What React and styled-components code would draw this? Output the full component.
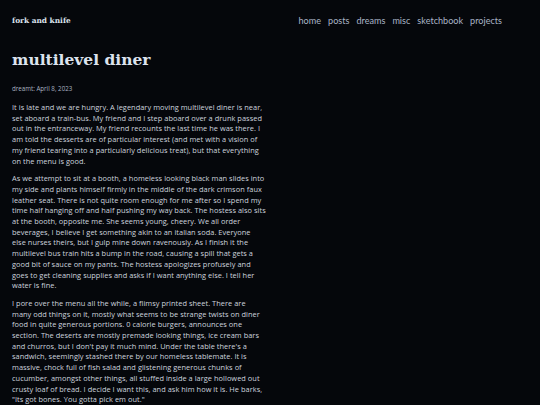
import React from "react";
import styled, { createGlobalStyle } from "styled-components";

const Global = createGlobalStyle`
  html, body { margin: 0; padding: 0; background: #05070b; }
  body { font-family: "Open Sans", "Lato", sans-serif; color: #cdd4df; }
`;

const Page = styled.div`
  width: 540px;
  height: 405px;
  overflow: hidden;
  background: #05070b;
  padding: 14px 12px 0 12px;
  box-sizing: border-box;
`;

const Header = styled.header`
  display: flex;
  align-items: center;
  justify-content: space-between;
  padding-right: 26px;
  height: 13px;
`;

const Brand = styled.a`
  font-family: "DejaVu Serif", serif;
  font-weight: bold;
  font-size: 7.4px;
  color: #dde3ee;
  text-decoration: none;
`;

const Nav = styled.nav`
  display: flex;
  gap: 7px;
`;

const NavLink = styled.a`
  font-family: "Lato", sans-serif;
  font-size: 9.1px;
  color: #a9b4c6;
  text-decoration: none;
`;

const Article = styled.article`
  width: 254px;
  margin-top: 23px;
`;

const Title = styled.h1`
  font-family: "DejaVu Serif", serif;
  font-weight: bold;
  font-size: 15.5px;
  color: #dde3ee;
  margin: 0;
  line-height: 20px;
`;

const Meta = styled.div`
  font-size: 6.2px;
  color: #aab3c2;
  margin-top: 15px;
  line-height: 8px;
`;

const Para = styled.p`
  font-size: 7.4px;
  letter-spacing: 0.04px;
  line-height: 10.7px;
  margin: 7px 0 0;
  color: #cdd4df;
  &:first-of-type { margin-top: 9px; }
`;

const links = ["home", "posts", "dreams", "misc", "sketchbook", "projects"];

export default function App() {
  return (
    <>
      <Global />
      <Page>
        <Header>
          <Brand href="#">fork and knife</Brand>
          <Nav>
            {links.map((l) => (
              <NavLink key={l} href="#">{l}</NavLink>
            ))}
          </Nav>
        </Header>
        <Article>
          <Title>multilevel diner</Title>
          <Meta>dreamt: April 8, 2023</Meta>
          <Para>
            It is late and we are hungry. A legendary moving multilevel diner is near, set aboard a train-bus. My friend and I step aboard over a drunk passed out in the entranceway. My friend recounts the last time he was there. I am told the desserts are of particular interest (and met with a vision of my friend tearing into a particularly delicious treat), but that everything on the menu is good.
          </Para>
          <Para>
            As we attempt to sit at a booth, a homeless looking black man slides into my side and plants himself firmly in the middle of the dark crimson faux leather seat. There is not quite room enough for me after so I spend my time half hanging off and half pushing my way back. The hostess also sits at the booth, opposite me. She seems young, cheery. We all order beverages, I believe I get something akin to an italian soda. Everyone else nurses theirs, but I gulp mine down ravenously. As I finish it the multilevel bus train hits a bump in the road, causing a spill that gets a good bit of sauce on my pants. The hostess apologizes profusely and goes to get cleaning supplies and asks if I want anything else. I tell her water is fine.
          </Para>
          <Para>
            I pore over the menu all the while, a flimsy printed sheet. There are many odd things on it, mostly what seems to be strange twists on diner food in quite generous portions. 0 calorie burgers, announces one section. The deserts are mostly premade looking things, ice cream bars and churros, but I don't pay it much mind. Under the table there's a sandwich, seemingly stashed there by our homeless tablemate. It is massive, chock full of fish salad and glistening generous chunks of cucumber, amongst other things, all stuffed inside a large hollowed out crusty loaf of bread. I decide I want this, and ask him how it is. He barks, "Its got bones. You gotta pick em out."
          </Para>
        </Article>
      </Page>
    </>
  );
}
